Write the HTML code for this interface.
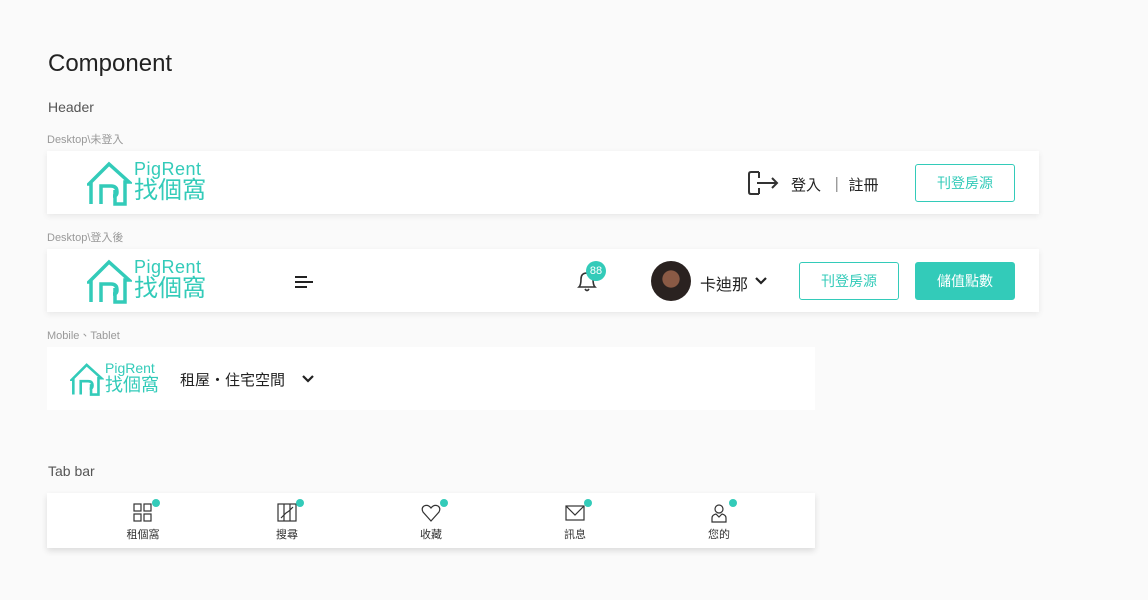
<!DOCTYPE html><html><head><meta charset="utf-8"><style>
*{margin:0;padding:0;box-sizing:border-box}
body{width:1148px;height:600px;background:#fafafa;font-family:"Liberation Sans","Noto Sans CJK TC",sans-serif;color:#222;position:relative;overflow:hidden}
.a{position:absolute}
.card{position:absolute;background:#fff;box-shadow:0 2px 6px rgba(0,0,0,.08)}
.lbl{position:absolute;font-size:11px;color:#999}
.t{color:#33cbb9}
.btn{position:absolute;border:1px solid #33cbb9;border-radius:3px;color:#33cbb9;font-size:14px;text-align:center;line-height:36px}
.tab{position:absolute;top:10px;width:60px;text-align:center;font-size:11px;color:#333}
.dot{position:absolute;width:8px;height:8px;border-radius:50%;background:#33cbb9}
</style></head><body>
<div class="a" style="left:48px;top:50px;font-size:24px;color:#222">Component</div>
<div class="a" style="left:48px;top:99px;font-size:14px;color:#555">Header</div>
<div class="lbl" style="left:47px;top:131px">Desktop\未登入</div>
<div class="card" style="left:47px;top:151px;width:992px;height:63px">
 <svg class="a" style="left:40px;top:9px" width="45" height="46" viewBox="0 0 45 46" fill="none" stroke="#33cbb9" stroke-width="3.5"><path d="M4 44V24H2L22 4L42 22H38V44H28V30M14 44V26H24Q30 26 30 32Q30 36 26 36"/></svg>
 <div class="a t" style="left:87px;top:8px;font-size:18px;letter-spacing:.5px">PigRent</div>
 <div class="a t" style="left:87px;top:26px;font-size:24px;line-height:28px">找個窩</div>
 <svg class="a" style="left:700px;top:19px" width="32" height="26" viewBox="0 0 32 26" fill="none" stroke="#333" stroke-width="2"><path d="M12 2H4Q2 2 2 4V22Q2 24 4 24H12M12 2V8M12 24V18M10 13H30M25 8L30 13L25 18"/></svg>
 <div class="a" style="left:744px;top:23px;font-size:15px">登入 &nbsp;｜ 註冊</div>
 <div class="btn" style="left:868px;top:13px;width:100px;height:38px">刊登房源</div>
</div>
<div class="lbl" style="left:47px;top:229px">Desktop\登入後</div>
<div class="card" style="left:47px;top:249px;width:992px;height:63px">
 <svg class="a" style="left:40px;top:9px" width="45" height="46" viewBox="0 0 45 46" fill="none" stroke="#33cbb9" stroke-width="3.5"><path d="M4 44V24H2L22 4L42 22H38V44H28V30M14 44V26H24Q30 26 30 32Q30 36 26 36"/></svg>
 <div class="a t" style="left:87px;top:8px;font-size:18px;letter-spacing:.5px">PigRent</div>
 <div class="a t" style="left:87px;top:26px;font-size:24px;line-height:28px">找個窩</div>
 <svg class="a" style="left:248px;top:26px" width="20" height="14" stroke="#222" stroke-width="2"><path d="M0 2H12M0 7H18M0 12H12"/></svg>
 <svg class="a" style="left:529px;top:20px" width="22" height="24" viewBox="0 0 22 24" fill="none" stroke="#333" stroke-width="1.6"><path d="M3 18Q5 16 5 10Q5 4 11 4Q17 4 17 10Q17 16 19 18ZM9 20Q11 23 13 20"/></svg>
 <div class="a" style="left:539px;top:12px;width:20px;height:20px;border-radius:50%;background:#33cbb9;color:#fff;font-size:11px;text-align:center;line-height:20px">88</div>
 <div class="a" style="left:604px;top:12px;width:40px;height:40px;border-radius:50%;background:radial-gradient(circle at 50% 45%,#8a5a45 0 28%,#2a2220 30%)"></div>
 <div class="a" style="left:653px;top:22px;font-size:16px">卡迪那</div>
 <svg class="a" style="left:708px;top:28px" width="12" height="8" fill="none" stroke="#222" stroke-width="2.2"><path d="M1 1L6 6L11 1"/></svg>
 <div class="btn" style="left:752px;top:13px;width:100px;height:38px">刊登房源</div>
 <div class="btn" style="left:868px;top:13px;width:100px;height:38px;background:#33cbb9;color:#fff">儲值點數</div>
</div>
<div class="lbl" style="left:47px;top:327px">Mobile、Tablet</div>
<div class="card" style="left:47px;top:347px;width:768px;height:63px;box-shadow:none">
 <svg class="a" style="left:23px;top:15px" width="34" height="34" viewBox="0 0 45 46" fill="none" stroke="#33cbb9" stroke-width="3.5"><path d="M4 44V24H2L22 4L42 22H38V44H28V30M14 44V26H24Q30 26 30 32Q30 36 26 36"/></svg>
 <div class="a t" style="left:58px;top:13px;font-size:14px">PigRent</div>
 <div class="a t" style="left:58px;top:28px;font-size:18px;line-height:20px">找個窩</div>
 <div class="a" style="left:133px;top:22px;font-size:15px">租屋・住宅空間</div>
 <svg class="a" style="left:255px;top:28px" width="12" height="8" fill="none" stroke="#222" stroke-width="2.2"><path d="M1 1L6 6L11 1"/></svg>
</div>
<div class="a" style="left:48px;top:463px;font-size:14px;color:#555">Tab bar</div>
<div class="card" style="left:47px;top:493px;width:768px;height:55px;box-shadow:0 3px 6px rgba(0,0,0,.12)">
 <div class="tab" style="left:66px"><svg width="20" height="20" fill="none" stroke="#333" stroke-width="1.2"><rect x="1" y="1" width="7" height="7"/><rect x="11" y="1" width="7" height="7"/><rect x="1" y="11" width="7" height="7"/><rect x="11" y="11" width="7" height="7"/></svg><div>租個窩</div></div>
 <div class="dot" style="left:105px;top:6px"></div>
 <div class="tab" style="left:210px"><svg width="20" height="20" fill="none" stroke="#333" stroke-width="1.2"><rect x="1" y="1" width="18" height="17"/><path d="M7 1V18M13 1V18M4 15L9 10L12 8L16 4"/></svg><div>搜尋</div></div>
 <div class="dot" style="left:249px;top:6px"></div>
 <div class="tab" style="left:354px"><svg width="20" height="20" fill="none" stroke="#333" stroke-width="1.2"><path d="M10 18L2 9Q0 5 3 3Q7 1 10 5Q13 1 17 3Q20 5 18 9Z"/></svg><div>收藏</div></div>
 <div class="dot" style="left:393px;top:6px"></div>
 <div class="tab" style="left:498px"><svg width="20" height="20" fill="none" stroke="#333" stroke-width="1.2"><rect x="1" y="3" width="18" height="14"/><path d="M1 3L10 12L19 3"/></svg><div>訊息</div></div>
 <div class="dot" style="left:537px;top:6px"></div>
 <div class="tab" style="left:642px"><svg width="20" height="20" fill="none" stroke="#333" stroke-width="1.2"><circle cx="10" cy="6" r="4"/><path d="M3 19V15Q3 12 7 11L10 14L13 11Q17 12 17 15V19Z"/></svg><div>您的</div></div>
 <div class="dot" style="left:682px;top:6px"></div>
</div>
</body></html>
